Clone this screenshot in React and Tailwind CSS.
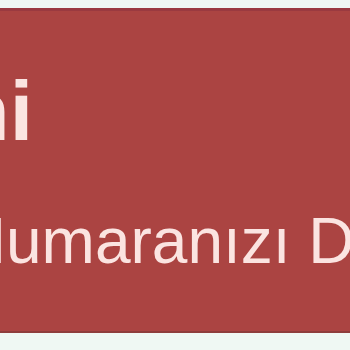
export default function App() {
  return (
    <div className="w-[350px] h-[350px] bg-[#eff8f3] pt-[8px] overflow-hidden" style={{ fontFamily: "'Liberation Sans', Arial, sans-serif" }}>
      <div className="h-[325px] bg-[#ab4442] border-t-[3px] border-b-[2px] border-t-[#9a3a40] border-b-[#8e3d3b] overflow-hidden text-[#fbe4e1]">
        {/* Başlık */}
        <div className="mt-[58px] w-[33px] flex justify-end whitespace-nowrap text-[84px] leading-none font-bold">
          <span>Hesap Güvenliğini</span>
        </div>
        {/* Mesaj */}
        <div className="mt-[56px] flex whitespace-nowrap text-[64px] leading-none">
          <span className="w-[6px] shrink-0 flex justify-end">
            <span>Lütfen Telefon N</span>
          </span>
          <span>umaranızı Doğrulayın</span>
        </div>
      </div>
    </div>
  );
}
